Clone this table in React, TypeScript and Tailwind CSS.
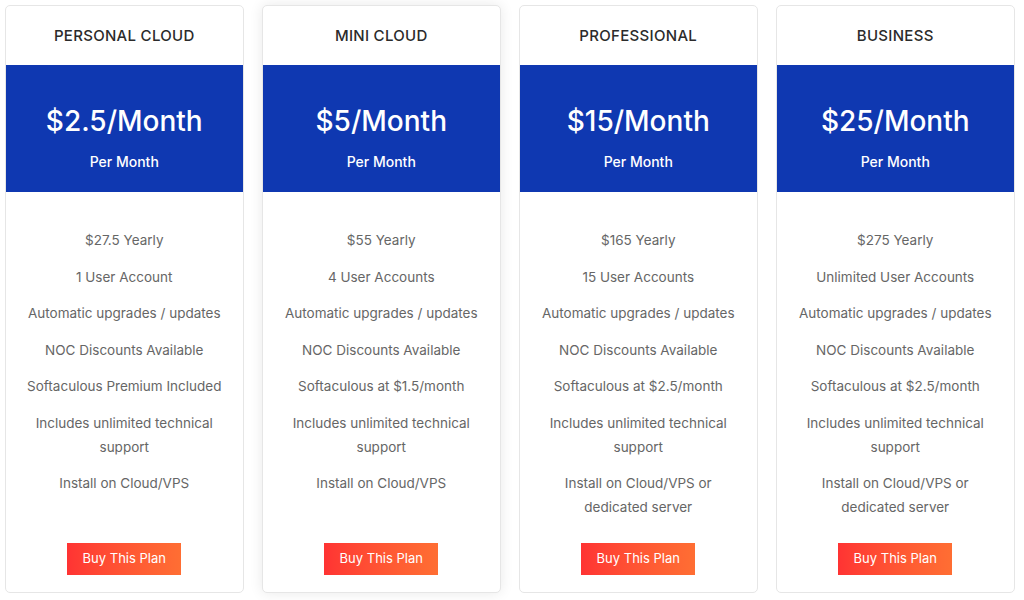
import React from 'react'

type Plan = {
    name: string
    price: string
    features: string[]
    featured?: boolean
}

const plans: Plan[] = [
    {
        name: 'Personal Cloud',
        price: '$2.5/Month',
        features: [
            '$27.5 Yearly',
            '1 User Account',
            'Automatic upgrades / updates',
            'NOC Discounts Available',
            'Softaculous Premium Included',
            'Includes unlimited technical support',
            'Install on Cloud/VPS',
        ],
    },
    {
        name: 'Mini Cloud',
        price: '$5/Month',
        featured: true,
        features: [
            '$55 Yearly',
            '4 User Accounts',
            'Automatic upgrades / updates',
            'NOC Discounts Available',
            'Softaculous at $1.5/month',
            'Includes unlimited technical support',
            'Install on Cloud/VPS',
        ],
    },
    {
        name: 'Professional',
        price: '$15/Month',
        features: [
            '$165 Yearly',
            '15 User Accounts',
            'Automatic upgrades / updates',
            'NOC Discounts Available',
            'Softaculous at $2.5/month',
            'Includes unlimited technical support',
            'Install on Cloud/VPS or dedicated server',
        ],
    },
    {
        name: 'Business',
        price: '$25/Month',
        features: [
            '$275 Yearly',
            'Unlimited User Accounts',
            'Automatic upgrades / updates',
            'NOC Discounts Available',
            'Softaculous at $2.5/month',
            'Includes unlimited technical support',
            'Install on Cloud/VPS or dedicated server',
        ],
    },
]

export default function App() {
    return (
        <div className="w-[1024px] h-[600px] bg-white overflow-hidden font-['Inter',sans-serif]">
            <div className="flex gap-[18.5px] pl-[5px] pt-[5px]">
                {plans.map((plan) => (
                    <PlanCard key={plan.name} plan={plan} />
                ))}
            </div>
        </div>
    )
}

const PlanCard = (props: { plan: Plan }) => {
    const { plan } = props
    return (
        <div
            className={`flex flex-col w-[238.5px] h-[588px] bg-white rounded-[5px] border border-[#e6e6e6] overflow-hidden ${
                plan.featured ? 'shadow-[0_0_14px_rgba(0,0,0,0.09)]' : ''
            }`}
        >
            {/* plan name */}
            <div className="h-[59px] flex items-center justify-center pt-[2px]">
                <h3 className="text-[15px] font-medium uppercase text-[#2b2b2b] tracking-[0.3px]">{plan.name}</h3>
            </div>

            {/* price band */}
            <div className="h-[127px] bg-[#0f38b1] flex flex-col items-center text-white">
                <span className="mt-[38px] text-[28px] leading-[36px] font-medium">{plan.price}</span>
                <span className="mt-[12px] text-[14px] font-medium">Per Month</span>
            </div>

            {/* features */}
            <ul className="flex flex-col gap-[12.5px] pt-[36px] px-[14px] text-center text-[13.5px] leading-[24px] text-[#666666]">
                {plan.features.map((f) => (
                    <li key={f}>{f}</li>
                ))}
            </ul>

            <div className="mt-auto pb-[17px] flex justify-center">
                <button className="w-[114px] h-[32px] text-white text-[13px] bg-gradient-to-r from-[#ff3333] to-[#ff6e33]">
                    Buy This Plan
                </button>
            </div>
        </div>
    )
}
